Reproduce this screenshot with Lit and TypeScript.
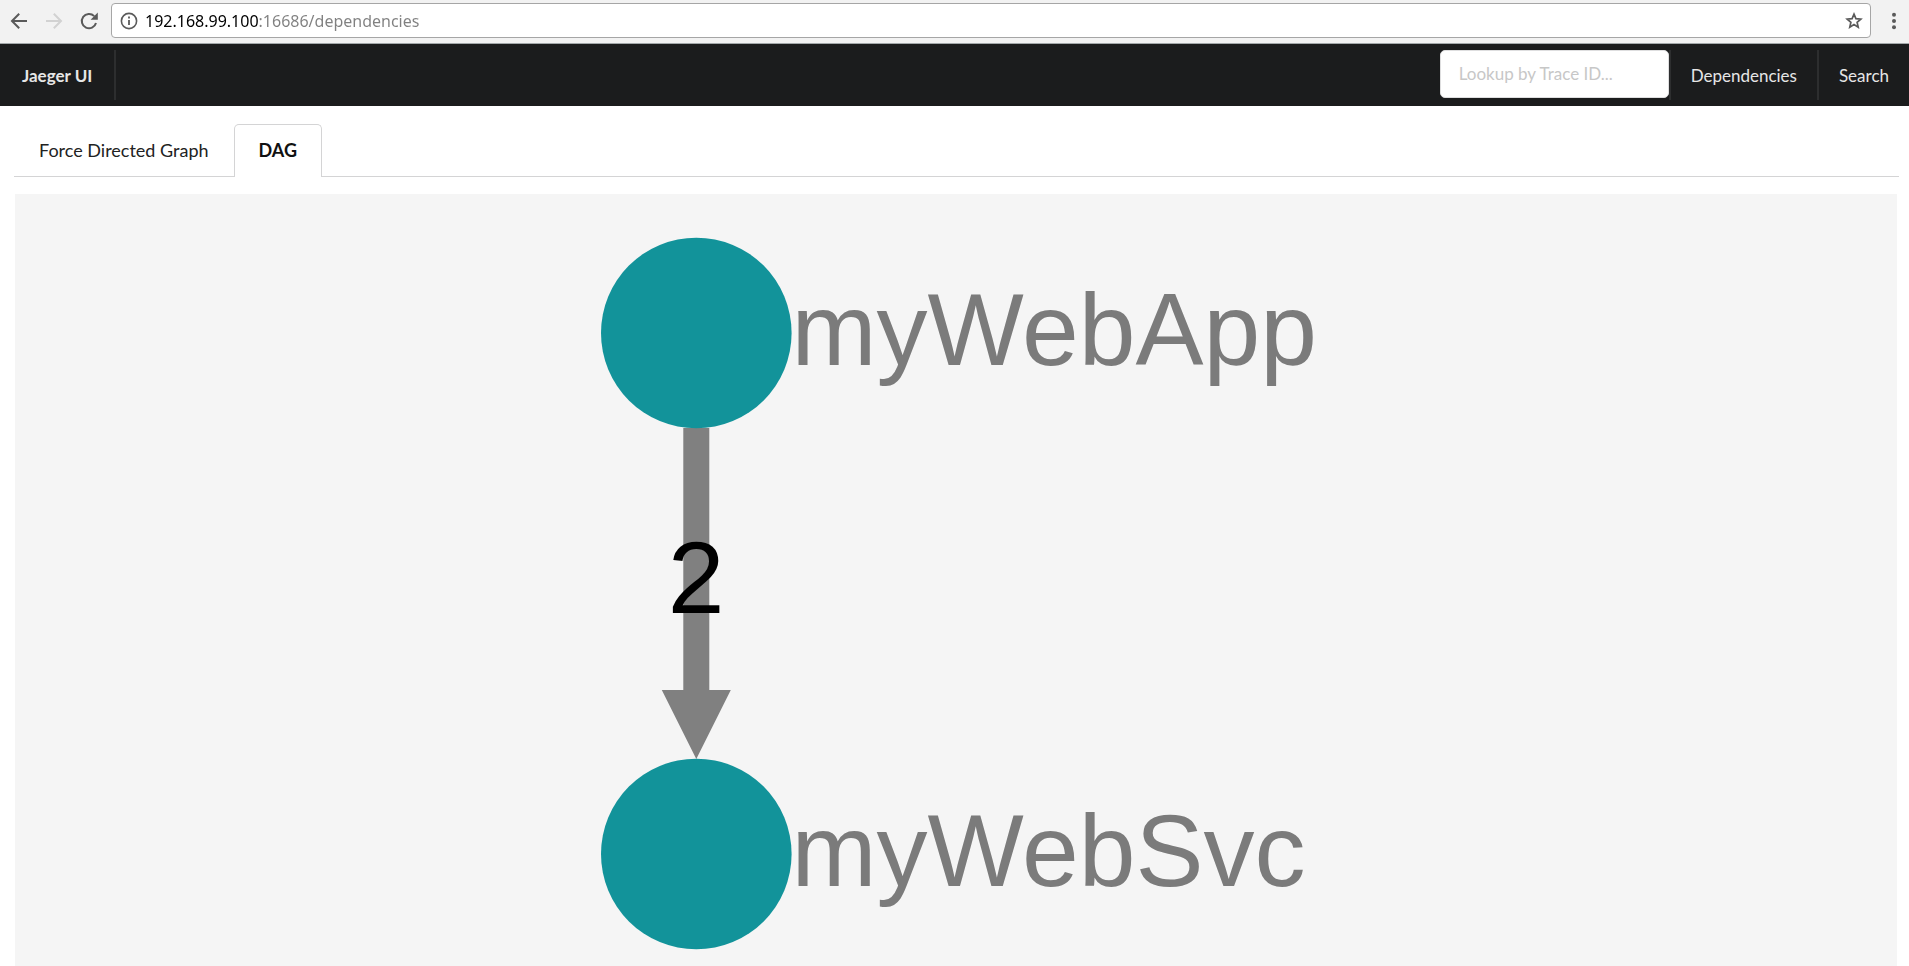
import { LitElement, html, svg, css } from "lit";
import { customElement, state } from "lit/decorators.js";

interface GraphNode {
  name: string;
  x: number;
  y: number;
}

const RADIUS = 95.3;
const NODES: GraphNode[] = [
  { name: "myWebApp", x: 681.3, y: 139 },
  { name: "myWebSvc", x: 681.3, y: 660 },
];

@customElement("browser-bar")
export class BrowserBar extends LitElement {
  static styles = css`
    :host {
      display: flex;
      align-items: center;
      box-sizing: border-box;
      height: 44px;
      padding: 0 6px 2px 8px;
      background: #f2f2f2;
      border-bottom: 1px solid #a3a8aa;
    }
    .tool {
      display: flex;
      flex: none;
      padding: 0;
      border: 0;
      background: none;
      color: #5a5a5a;
      width: 35px;
    }
    .tool:disabled {
      color: #d2d2d2;
    }
    .menu {
      width: 22px;
      margin-left: 10px;
    }
    .address {
      display: flex;
      flex: 1;
      align-items: center;
      box-sizing: border-box;
      height: 35px;
      margin-left: -2px;
      padding: 0 6px 0 7px;
      background: #fff;
      border: 1px solid #a6a6a6;
      border-radius: 4px;
    }
    .info {
      flex: none;
      color: #5a5a5a;
    }
    .url {
      flex: 1;
      min-width: 0;
      height: 28px;
      margin-left: 6px;
      padding: 0;
      border: 0;
      outline: 0;
      font: 16px/28px "Noto Sans", sans-serif;
      color: transparent;
      background: linear-gradient(90deg, #000 114px, #808080 114px);
      -webkit-background-clip: text;
      background-clip: text;
    }
    .star {
      width: 20px;
    }
    svg {
      display: block;
    }
  `;

  render() {
    return html`
      <button class="tool" aria-label="Back">
        <svg width="22" height="22" viewBox="0 0 22 22" fill="none" stroke="currentColor" stroke-width="2">
          <path d="M19 11H4.5M11.2 3.8 4 11l7.2 7.2" />
        </svg>
      </button>
      <button class="tool" aria-label="Forward" disabled>
        <svg width="22" height="22" viewBox="0 0 22 22" fill="none" stroke="currentColor" stroke-width="2">
          <path d="M3 11h14.5M10.8 3.8 18 11l-7.2 7.2" />
        </svg>
      </button>
      <button class="tool" aria-label="Reload">
        <svg width="22" height="22" viewBox="0 0 22 22" fill="none" stroke="currentColor" stroke-width="2">
          <path d="M16.2 6.1A7.2 7.2 0 1 0 18 13" />
          <path d="M19.8 2.6v7.2h-7.2z" fill="currentColor" stroke="none" />
        </svg>
      </button>
      <div class="address">
        <svg class="info" width="20" height="20" viewBox="0 0 20 20" fill="none" stroke="currentColor">
          <circle cx="10" cy="10" r="7.6" stroke-width="1.6" />
          <path d="M10 9v5M10 5.6v1.8" stroke-width="1.8" />
        </svg>
        <input class="url" type="text" aria-label="Address" spellcheck="false" value="192.168.99.100:16686/dependencies" />
        <button class="tool star" aria-label="Bookmark this page">
          <svg width="20" height="20" viewBox="0 0 20 20" fill="none" stroke="currentColor" stroke-width="1.7">
            <path d="M10 3.2l1.9 4.5 4.9.4-3.7 3.2 1.1 4.8-4.2-2.6-4.2 2.6 1.1-4.8-3.7-3.2 4.9-.4z" />
          </svg>
        </button>
      </div>
      <button class="tool menu" aria-label="Menu">
        <svg width="22" height="22" viewBox="0 0 22 22" fill="currentColor">
          <circle cx="13" cy="4.8" r="2" />
          <circle cx="13" cy="11" r="2" />
          <circle cx="13" cy="17.2" r="2" />
        </svg>
      </button>
    `;
  }
}

@customElement("jaeger-nav")
export class JaegerNav extends LitElement {
  static styles = css`
    :host {
      display: flex;
      align-items: center;
      box-sizing: border-box;
      height: 62px;
      background: #1b1c1d;
      font: 17px/22px Lato, sans-serif;
    }
    .item {
      box-sizing: border-box;
      height: 50px;
      padding: 15px 20px 13px;
      color: #e6e6e6;
      text-decoration: none;
      border-left: 2px solid #2d2e2f;
    }
    .brand {
      padding: 15px 22px 13px;
      border-left: 0;
      border-right: 2px solid #2d2e2f;
      font-weight: 700;
    }
    .lookup {
      box-sizing: border-box;
      width: 229px;
      height: 48px;
      margin: 0 0 2px auto;
      padding: 0 18px 2px;
      font: inherit;
      color: #222;
      background: #fff;
      border: 1px solid #dededf;
      border-radius: 5px;
    }
    .lookup::placeholder {
      color: #c7c7c7;
      opacity: 1;
    }
  `;

  render() {
    return html`
      <a class="item brand" href="#">Jaeger UI</a>
      <input class="lookup" type="text" aria-label="Lookup by Trace ID" placeholder="Lookup by Trace ID..." />
      <a class="item" href="#dependencies">Dependencies</a>
      <a class="item" href="#search">Search</a>
    `;
  }
}

@customElement("dependency-dag")
export class DependencyDag extends LitElement {
  static styles = css`
    :host {
      display: block;
      background: #f5f5f5;
    }
    .canvas {
      display: block;
      width: 100%;
    }
    .node {
      fill: #12939a;
    }
    .edge {
      fill: #808080;
    }
    .name,
    .calls {
      font: 102px "Liberation Sans", Arial, sans-serif;
      fill: #7b7b7b;
    }
    .calls {
      fill: #000;
      text-anchor: middle;
    }
  `;

  render() {
    return html`
      <svg class="canvas" viewBox="0 0 1882 768" role="img" aria-label="Service dependencies">
        <path class="edge" d="M668.3 234h26v262h21.5l-34.5 69-34.5-69h21.5z" />
        <text class="calls" x="681" y="419">2</text>
        ${NODES.map(
          (n) => svg`
            <circle class="node" cx=${n.x} cy=${n.y} r=${RADIUS} />
            <text class="name" x=${n.x + RADIUS} y=${n.y + 32}>${n.name}</text>
          `
        )}
      </svg>
    `;
  }
}

@customElement("app-root")
export class AppRoot extends LitElement {
  static styles = css`
    :host {
      display: flex;
      flex-direction: column;
      min-height: 100vh;
      background: #fff;
      font: 18px/22px Lato, sans-serif;
    }
    .tabs {
      display: flex;
      margin: 18px 10px 0 14px;
      border-bottom: 1px solid #d4d4d5;
    }
    .tab {
      box-sizing: border-box;
      height: 53px;
      margin-bottom: -1px;
      padding: 0 24px 2px;
      font: inherit;
      color: #222;
      background: none;
      border: 1px solid transparent;
      border-bottom: 0;
      border-radius: 5px 5px 0 0;
    }
    .tab.active {
      color: #111;
      font-weight: 700;
      background: #fff;
      border-color: #d4d4d5;
    }
    .graph {
      flex: 1;
      margin: 17px 12px 0 15px;
    }
  `;

  @state() private active = "DAG";

  render() {
    return html`
      <browser-bar></browser-bar>
      <jaeger-nav></jaeger-nav>
      <div class="tabs" role="tablist">
        ${["Force Directed Graph", "DAG"].map(
          (t) => html`<button
            class="tab ${t === this.active ? "active" : ""}"
            role="tab"
            aria-selected=${t === this.active}
            @click=${() => (this.active = t)}
          >${t}</button>`
        )}
      </div>
      <dependency-dag class="graph"></dependency-dag>
    `;
  }
}
